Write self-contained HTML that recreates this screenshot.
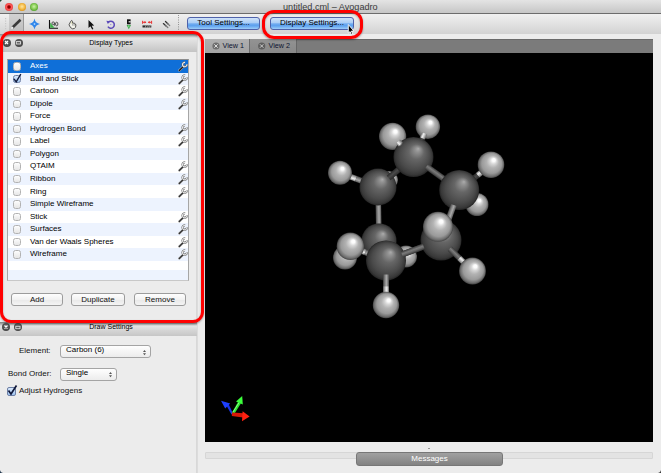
<!DOCTYPE html>
<html><head><meta charset="utf-8">
<style>
*{margin:0;padding:0;box-sizing:border-box}
html,body{width:661px;height:473px;overflow:hidden;background:#ececec;font-family:"Liberation Sans",sans-serif;position:relative}
.a{position:absolute}
#titlebar{left:0;top:0;width:661px;height:13px;background:linear-gradient(#e4e4e4,#c6c6c6)}
#tbline{left:0;top:13px;width:661px;height:1px;background:#6c6c6c}
#toolbar{left:0;top:14px;width:661px;height:20px;background:linear-gradient(#f0f0f0,#d2d2d2)}
.tl{width:8px;height:8px;border-radius:50%;top:3px}
.btn{height:13px;border-radius:3px;font-size:8px;text-align:center;line-height:10px;color:#000}
.blue{background:linear-gradient(#cfe2f9,#a9cdf5 45%,#72acf0 52%,#5da1ee 70%,#9ccdf9);border:1px solid #4f62aa}
.dtitle{left:0;width:197px;font-size:7px;text-align:center;color:#000}
.cbtn{width:8px;height:8px;border-radius:50%;background:radial-gradient(circle at 50% 40%,#666,#3a3a3a)}
#list{left:7px;top:59px;width:182px;height:222px;background:#fff;border:1px solid #a6a6a6;border-top-color:#8c8c8c;border-bottom-color:#c8c8c8;overflow:hidden}
.row{position:absolute;left:0;width:180px;height:12.6px;font-size:8px;color:#000}
.row.alt{background:#edf3fe}
.row.sel{background:#0f6fd8;color:#fff}
.row span{position:absolute;left:22px;top:1px}
.cb{position:absolute;left:4.5px;top:2px;width:8.5px;height:8.5px;border-radius:2.5px;border:1px solid #b2b2b2;background:linear-gradient(#fdfdfd,#e6e6e6)}
.wr{position:absolute;left:169.5px;top:1px;width:10px;height:10px}
.pbtn{height:13px;border:1px solid #9c9c9c;border-radius:3px;background:linear-gradient(#fefefe,#f2f2f2 50%,#e8e8e8 51%,#f4f4f4);font-size:8px;text-align:center;line-height:12px;color:#111}
.red{border:3.4px solid #f00;box-shadow:0 1px 2px rgba(0,0,0,.35), inset 0 1px 2px rgba(0,0,0,.3)}
.combo{height:13px;border:1px solid #a4a4a4;border-radius:3px;background:linear-gradient(#fefefe,#ececec);font-size:8px;line-height:8px;color:#000;padding-left:5px}
</style></head><body>
<div id="titlebar" class="a">
  <div class="a" style="left:0;top:0;width:3px;height:3px;background:radial-gradient(circle at 100% 100%,transparent 2.6px,#1d4a36 3.2px)"></div>
  <div class="a tl" style="left:5px;background:radial-gradient(circle at 50% 50%,#700000 0,#a00000 22%,#ff5c5c 42%,#f04848 65%,#c83030 85%,#902424 100%)"></div>
  <div class="a tl" style="left:17.5px;background:radial-gradient(circle at 50% 45%,#ffe6a0 0,#f6c050 40%,#dc9418 75%,#9c6414 100%)"></div>
  <div class="a tl" style="left:30px;background:radial-gradient(circle at 50% 45%,#ccf2a8 0,#8cd05a 40%,#52a02c 75%,#336e1e 100%)"></div>
  <div class="a" style="left:283px;top:1.5px;font-size:9.15px;color:#3a3a3a;line-height:11px">untitled.cml – Avogadro</div>
</div>
<div id="tbline" class="a"></div>
<div id="toolbar" class="a">
  <!-- pressed pencil -->
  <div class="a" style="left:9px;top:0;width:15px;height:17px;background:linear-gradient(#d2d2d2,#bfbfbf);border-right:1px solid #9a9a9a"></div>
  <svg class="a" style="left:0;top:0" width="180" height="20" viewBox="0 14 180 20">
    <g fill="#c8c8c8"><rect x="5" y="18" width="1.2" height="1.2"/><rect x="5" y="20.5" width="1.2" height="1.2"/><rect x="5" y="23" width="1.2" height="1.2"/><rect x="5" y="25.5" width="1.2" height="1.2"/><rect x="5" y="28" width="1.2" height="1.2"/></g>
    <!-- pencil -->
    <line x1="12.5" y1="27.5" x2="20.5" y2="19.8" stroke="#3a3a3a" stroke-width="2.6"/>
    <line x1="11.5" y1="28.6" x2="13" y2="27" stroke="#eee" stroke-width="1.6"/>
    <!-- star -->
    <path d="M34.5 18.5 Q35.3 23.2 40 24 Q35.3 24.8 34.5 29.5 Q33.7 24.8 29 24 Q33.7 23.2 34.5 18.5Z" fill="#2f86ea"/>
    <circle cx="34.5" cy="24" r=".9" fill="#a8d4ff"/>
    <!-- measure -->
    <path d="M49.5 20 V28.3 H58" fill="none" stroke="#111" stroke-width="1.1"/>
    <path d="M50.2 22.5 L54.5 27.8 H50.2Z" fill="#3fb04a"/>
    <g fill="none" stroke="#333" stroke-width=".8"><circle cx="53.2" cy="23.2" r="1.3"/><path d="M54.5 23.2 L54.3 25.8"/><ellipse cx="56.7" cy="24" rx="1.2" ry="1.8"/></g>
    <!-- hand -->
    <path d="M69 24.8 L70.8 21.2 Q71.5 19.9 72.2 20.8 L72.6 23 L74.2 23.2 Q75.6 23.6 75.9 25 L75.5 27.4 Q74.6 28.9 72.5 28.8 Q70.3 28.3 69 24.8Z" fill="#f2f2ea" stroke="#3a3a3a" stroke-width=".85"/>
    <path d="M72.6 23.2 L72.9 25.8 M74.2 23.4 L74.3 25.6" stroke="#666" stroke-width=".6" fill="none"/>
    <path d="M71.6 21.5 L71.9 24" stroke="#d8d8a0" stroke-width=".7"/>
    <!-- arrow -->
    <path d="M88.5 20 L88.5 28 L90.4 26.3 L92.2 29.6 L93.4 29 L91.7 25.8 L94.2 25.6Z" fill="#111"/>
    <!-- rotate -->
    <path d="M108.2 22.4 A3.5 3.5 0 1 1 107.9 26.7" fill="none" stroke="#5b49b8" stroke-width="1.5"/>
    <path d="M106.3 20.8 L110 21.2 L107.9 24Z" fill="#5b49b8"/>
    <circle cx="110.8" cy="24.6" r=".6" fill="#8a7ad0"/>
    <!-- bond centric -->
    <rect x="127" y="19.3" width="3.6" height="5" fill="#111"/>
    <rect x="128.6" y="21.2" width="2.1" height="1.2" fill="#eee"/>
    <path d="M126.6 25 H131 L128.8 29.2Z" fill="#3aa84a"/>
    <rect x="128.2" y="25.3" width="1.2" height="2" fill="#8ad890"/>
    <!-- align -->
    <g stroke="#e83030" stroke-width="1" fill="none"><path d="M142.6 20.8 V23.8 M151.6 20.8 V23.8 M143 22.3 H146 M148.2 22.3 H151.2"/></g>
    <path d="M146.4 22.3 L144.4 21 V23.6Z M147.8 22.3 L149.8 21 V23.6Z" fill="#e83030"/>
    <rect x="142.5" y="25.4" width="8.8" height="2.1" fill="#2a2a2a"/>
    <g stroke="#ddd" stroke-width=".6"><path d="M145.3 27.5 L146 25.4 M147.6 27.5 L148.3 25.4 M149.5 27.5 L150.2 25.4"/></g>
    <!-- auto opt -->
    <g stroke-width="1.3" stroke-linecap="round"><line x1="163.4" y1="23.6" x2="165.8" y2="25.8" stroke="#333"/><line x1="165.8" y1="25.8" x2="167.8" y2="27.6" stroke="#777"/><line x1="165.5" y1="21.5" x2="167.8" y2="23.7" stroke="#333"/><line x1="167.8" y1="23.7" x2="169.7" y2="25.6" stroke="#777"/></g>
    <g fill="#666"><rect x="178" y="15" width=".8" height=".8"/><rect x="178" y="17.3" width=".8" height=".8"/><rect x="178" y="19.6" width=".8" height=".8"/><rect x="178" y="21.9" width=".8" height=".8"/><rect x="178" y="24.2" width=".8" height=".8"/><rect x="178" y="26.5" width=".8" height=".8"/><rect x="178" y="28.8" width=".8" height=".8"/></g>
  </svg>
  <div class="a btn blue" style="left:187px;top:3px;width:73px">Tool Settings...</div>
  <div class="a btn blue" style="left:270px;top:3px;width:84px">Display Settings...</div>
</div>

<!-- dock 1 -->
<div class="a" style="left:196px;top:34px;width:2px;height:439px;background:linear-gradient(90deg,#d6d6d6,#dedede)"></div>
<div class="a dtitle" style="top:34px;height:18px;background:linear-gradient(#8a8a8a,#e6e6e6 4px,#d8d8d8 10px,#c4c4c4)">
  <div class="a cbtn" style="left:2.5px;top:4.5px"></div>
  <div class="a cbtn" style="left:14.5px;top:4.5px"></div>
  <svg class="a" style="left:0;top:0" width="30" height="18">
    <path d="M5 7 L8 10 M8 7 L5 10" stroke="#fff" stroke-width="1.2"/>
    <rect x="16.3" y="7.6" width="4.2" height="2.4" fill="none" stroke="#ddd" stroke-width=".9"/>
  </svg>
  <div class="a" style="left:0;top:5px;width:222px;text-align:center;line-height:8px">Display Types</div>
</div>
<div id="list" class="a">
  <div class="row sel" style="top:0.00px;height:12.55px"><div class="cb"></div><span>Axes</span><svg class="wr" viewBox="0 0 10 10" style="overflow:visible"><path d="M1.3 9.4 L5.6 5.2" stroke="#bbb" stroke-width="2.3" stroke-linecap="round"/><path d="M1.3 9.4 L5.6 5.2" stroke="#1a1a1a" stroke-width="1.4" stroke-linecap="round"/><path d="M8.9 3.3 A2.2 2.2 0 1 1 7.1 1.4" fill="none" stroke="#666" stroke-width="2.1"/><path d="M8.9 3.3 A2.2 2.2 0 1 1 7.1 1.4" fill="none" stroke="#f0f0f0" stroke-width="1.1"/></svg></div>
  <div class="row alt" style="top:12.55px;height:12.55px"><div class="cb" style="border-color:#6d7fa5;background:linear-gradient(#d8e8fb,#9fc4f0)"></div><svg style="position:absolute;left:3px;top:0" width="12" height="11"><path d="M3 5.8 L5.2 8.8 L9.8 1.2" fill="none" stroke="#10183a" stroke-width="1.4"/></svg><span>Ball and Stick</span><svg class="wr" viewBox="0 0 10 10" style="overflow:visible"><path d="M1.3 9.4 L5.6 5.2" stroke="#bbb" stroke-width="2.3" stroke-linecap="round"/><path d="M1.3 9.4 L5.6 5.2" stroke="#333" stroke-width="1.4" stroke-linecap="round"/><path d="M8.9 3.3 A2.2 2.2 0 1 1 7.1 1.4" fill="none" stroke="#666" stroke-width="2.1"/><path d="M8.9 3.3 A2.2 2.2 0 1 1 7.1 1.4" fill="none" stroke="#e8e8e8" stroke-width="1.1"/></svg></div>
  <div class="row" style="top:25.10px;height:12.55px"><div class="cb"></div><span>Cartoon</span><svg class="wr" viewBox="0 0 10 10" style="overflow:visible"><path d="M1.3 9.4 L5.6 5.2" stroke="#bbb" stroke-width="2.3" stroke-linecap="round"/><path d="M1.3 9.4 L5.6 5.2" stroke="#333" stroke-width="1.4" stroke-linecap="round"/><path d="M8.9 3.3 A2.2 2.2 0 1 1 7.1 1.4" fill="none" stroke="#666" stroke-width="2.1"/><path d="M8.9 3.3 A2.2 2.2 0 1 1 7.1 1.4" fill="none" stroke="#e8e8e8" stroke-width="1.1"/></svg></div>
  <div class="row alt" style="top:37.65px;height:12.55px"><div class="cb"></div><span>Dipole</span><svg class="wr" viewBox="0 0 10 10" style="overflow:visible"><path d="M1.3 9.4 L5.6 5.2" stroke="#bbb" stroke-width="2.3" stroke-linecap="round"/><path d="M1.3 9.4 L5.6 5.2" stroke="#333" stroke-width="1.4" stroke-linecap="round"/><path d="M8.9 3.3 A2.2 2.2 0 1 1 7.1 1.4" fill="none" stroke="#666" stroke-width="2.1"/><path d="M8.9 3.3 A2.2 2.2 0 1 1 7.1 1.4" fill="none" stroke="#e8e8e8" stroke-width="1.1"/></svg></div>
  <div class="row" style="top:50.20px;height:12.55px"><div class="cb"></div><span>Force</span></div>
  <div class="row alt" style="top:62.75px;height:12.55px"><div class="cb"></div><span>Hydrogen Bond</span><svg class="wr" viewBox="0 0 10 10" style="overflow:visible"><path d="M1.3 9.4 L5.6 5.2" stroke="#bbb" stroke-width="2.3" stroke-linecap="round"/><path d="M1.3 9.4 L5.6 5.2" stroke="#333" stroke-width="1.4" stroke-linecap="round"/><path d="M8.9 3.3 A2.2 2.2 0 1 1 7.1 1.4" fill="none" stroke="#666" stroke-width="2.1"/><path d="M8.9 3.3 A2.2 2.2 0 1 1 7.1 1.4" fill="none" stroke="#e8e8e8" stroke-width="1.1"/></svg></div>
  <div class="row" style="top:75.30px;height:12.55px"><div class="cb"></div><span>Label</span><svg class="wr" viewBox="0 0 10 10" style="overflow:visible"><path d="M1.3 9.4 L5.6 5.2" stroke="#bbb" stroke-width="2.3" stroke-linecap="round"/><path d="M1.3 9.4 L5.6 5.2" stroke="#333" stroke-width="1.4" stroke-linecap="round"/><path d="M8.9 3.3 A2.2 2.2 0 1 1 7.1 1.4" fill="none" stroke="#666" stroke-width="2.1"/><path d="M8.9 3.3 A2.2 2.2 0 1 1 7.1 1.4" fill="none" stroke="#e8e8e8" stroke-width="1.1"/></svg></div>
  <div class="row alt" style="top:87.85px;height:12.55px"><div class="cb"></div><span>Polygon</span></div>
  <div class="row" style="top:100.40px;height:12.55px"><div class="cb"></div><span>QTAIM</span><svg class="wr" viewBox="0 0 10 10" style="overflow:visible"><path d="M1.3 9.4 L5.6 5.2" stroke="#bbb" stroke-width="2.3" stroke-linecap="round"/><path d="M1.3 9.4 L5.6 5.2" stroke="#333" stroke-width="1.4" stroke-linecap="round"/><path d="M8.9 3.3 A2.2 2.2 0 1 1 7.1 1.4" fill="none" stroke="#666" stroke-width="2.1"/><path d="M8.9 3.3 A2.2 2.2 0 1 1 7.1 1.4" fill="none" stroke="#e8e8e8" stroke-width="1.1"/></svg></div>
  <div class="row alt" style="top:112.95px;height:12.55px"><div class="cb"></div><span>Ribbon</span><svg class="wr" viewBox="0 0 10 10" style="overflow:visible"><path d="M1.3 9.4 L5.6 5.2" stroke="#bbb" stroke-width="2.3" stroke-linecap="round"/><path d="M1.3 9.4 L5.6 5.2" stroke="#333" stroke-width="1.4" stroke-linecap="round"/><path d="M8.9 3.3 A2.2 2.2 0 1 1 7.1 1.4" fill="none" stroke="#666" stroke-width="2.1"/><path d="M8.9 3.3 A2.2 2.2 0 1 1 7.1 1.4" fill="none" stroke="#e8e8e8" stroke-width="1.1"/></svg></div>
  <div class="row" style="top:125.50px;height:12.55px"><div class="cb"></div><span>Ring</span><svg class="wr" viewBox="0 0 10 10" style="overflow:visible"><path d="M1.3 9.4 L5.6 5.2" stroke="#bbb" stroke-width="2.3" stroke-linecap="round"/><path d="M1.3 9.4 L5.6 5.2" stroke="#333" stroke-width="1.4" stroke-linecap="round"/><path d="M8.9 3.3 A2.2 2.2 0 1 1 7.1 1.4" fill="none" stroke="#666" stroke-width="2.1"/><path d="M8.9 3.3 A2.2 2.2 0 1 1 7.1 1.4" fill="none" stroke="#e8e8e8" stroke-width="1.1"/></svg></div>
  <div class="row alt" style="top:138.05px;height:12.55px"><div class="cb"></div><span>Simple Wireframe</span></div>
  <div class="row" style="top:150.60px;height:12.55px"><div class="cb"></div><span>Stick</span><svg class="wr" viewBox="0 0 10 10" style="overflow:visible"><path d="M1.3 9.4 L5.6 5.2" stroke="#bbb" stroke-width="2.3" stroke-linecap="round"/><path d="M1.3 9.4 L5.6 5.2" stroke="#333" stroke-width="1.4" stroke-linecap="round"/><path d="M8.9 3.3 A2.2 2.2 0 1 1 7.1 1.4" fill="none" stroke="#666" stroke-width="2.1"/><path d="M8.9 3.3 A2.2 2.2 0 1 1 7.1 1.4" fill="none" stroke="#e8e8e8" stroke-width="1.1"/></svg></div>
  <div class="row alt" style="top:163.15px;height:12.55px"><div class="cb"></div><span>Surfaces</span><svg class="wr" viewBox="0 0 10 10" style="overflow:visible"><path d="M1.3 9.4 L5.6 5.2" stroke="#bbb" stroke-width="2.3" stroke-linecap="round"/><path d="M1.3 9.4 L5.6 5.2" stroke="#333" stroke-width="1.4" stroke-linecap="round"/><path d="M8.9 3.3 A2.2 2.2 0 1 1 7.1 1.4" fill="none" stroke="#666" stroke-width="2.1"/><path d="M8.9 3.3 A2.2 2.2 0 1 1 7.1 1.4" fill="none" stroke="#e8e8e8" stroke-width="1.1"/></svg></div>
  <div class="row" style="top:175.70px;height:12.55px"><div class="cb"></div><span>Van der Waals Spheres</span><svg class="wr" viewBox="0 0 10 10" style="overflow:visible"><path d="M1.3 9.4 L5.6 5.2" stroke="#bbb" stroke-width="2.3" stroke-linecap="round"/><path d="M1.3 9.4 L5.6 5.2" stroke="#333" stroke-width="1.4" stroke-linecap="round"/><path d="M8.9 3.3 A2.2 2.2 0 1 1 7.1 1.4" fill="none" stroke="#666" stroke-width="2.1"/><path d="M8.9 3.3 A2.2 2.2 0 1 1 7.1 1.4" fill="none" stroke="#e8e8e8" stroke-width="1.1"/></svg></div>
  <div class="row alt" style="top:188.25px;height:12.55px"><div class="cb"></div><span>Wireframe</span><svg class="wr" viewBox="0 0 10 10" style="overflow:visible"><path d="M1.3 9.4 L5.6 5.2" stroke="#bbb" stroke-width="2.3" stroke-linecap="round"/><path d="M1.3 9.4 L5.6 5.2" stroke="#333" stroke-width="1.4" stroke-linecap="round"/><path d="M8.9 3.3 A2.2 2.2 0 1 1 7.1 1.4" fill="none" stroke="#666" stroke-width="2.1"/><path d="M8.9 3.3 A2.2 2.2 0 1 1 7.1 1.4" fill="none" stroke="#e8e8e8" stroke-width="1.1"/></svg></div>
  <div class="row" style="top:200.80px;height:9.30px"></div>
  <div class="row alt" style="top:210.10px;height:14.00px"></div>
</div>
<div class="a pbtn" style="left:11px;top:293px;width:52px">Add</div>
<div class="a pbtn" style="left:71px;top:293px;width:54px">Duplicate</div>
<div class="a pbtn" style="left:134px;top:293px;width:52px">Remove</div>

<!-- dock 2 -->
<div class="a dtitle" style="top:322px;height:13.6px;background:linear-gradient(#7a7a7a,#e4e4e4 4px,#d6d6d6 8px,#c6c6c6)">
  <div class="a cbtn" style="left:2px;top:1px"></div>
  <div class="a cbtn" style="left:14px;top:1px"></div>
  <svg class="a" style="left:0;top:0" width="30" height="13">
    <path d="M4.5 3.5 L7.5 6.5 M7.5 3.5 L4.5 6.5" stroke="#fff" stroke-width="1.3"/>
    <rect x="15.8" y="4.3" width="4.2" height="2.4" fill="none" stroke="#ddd" stroke-width=".9"/>
  </svg>
  <div class="a" style="left:0;top:1px;width:222px;text-align:center;line-height:8px">Draw Settings</div>
</div>
<div class="a" style="left:19px;top:346px;font-size:8px;color:#111">Element:</div>
<div class="a combo" style="left:60px;top:345px;width:91px">Carbon (6)<svg class="a" style="right:3px;top:2.5px" width="5" height="7"><path d="M1 3 L2.5 1 L4 3Z M1 4.2 L2.5 6.2 L4 4.2Z" fill="#555"/></svg></div>
<div class="a" style="left:8px;top:369px;font-size:8px;color:#111">Bond Order:</div>
<div class="a combo" style="left:60px;top:367.5px;width:57px">Single<svg class="a" style="right:3px;top:2.5px" width="5" height="7"><path d="M1 3 L2.5 1 L4 3Z M1 4.2 L2.5 6.2 L4 4.2Z" fill="#555"/></svg></div>
<div class="a" style="left:7px;top:386.5px;width:9px;height:9px;border-radius:2px;border:1px solid #6d7fa5;background:linear-gradient(#d8e8fb,#9fc4f0)"></div>
<svg class="a" style="left:6px;top:384px" width="12" height="12"><path d="M2.5 6.5 L5 10 L10.5 1.5" fill="none" stroke="#10183a" stroke-width="1.7"/></svg>
<div class="a" style="left:19px;top:386px;font-size:8px;color:#111">Adjust Hydrogens</div>

<!-- view -->
<div class="a" style="left:205px;top:39px;width:448px;height:14px;background:#7b7b7b;border-top:1px solid #6a6a6a"></div>
<div class="a" style="left:205px;top:39px;width:45px;height:14px;background:linear-gradient(#b0b0b0,#a2a2a2);border-right:1px solid #6a6a6a"></div>
<div class="a" style="left:250px;top:39px;width:47px;height:14px;background:linear-gradient(#939393,#888);border-right:1px solid #666"></div>
<svg class="a" style="left:205px;top:39px" width="100" height="14">
  <circle cx="11" cy="7" r="3.6" fill="#6e6e6e"/><path d="M9.3 5.3 L12.7 8.7 M12.7 5.3 L9.3 8.7" stroke="#ddd" stroke-width="1"/>
  <circle cx="56.7" cy="7" r="3.6" fill="#5e5e5e"/><path d="M55 5.3 L58.4 8.7 M58.4 5.3 L55 8.7" stroke="#ccc" stroke-width="1"/>
</svg>
<div class="a" style="left:222.5px;top:42px;font-size:7.2px;color:#0c1430;line-height:8px">View 1</div>
<div class="a" style="left:268.5px;top:42px;font-size:7.2px;color:#0c1430;line-height:8px">View 2</div>
<div class="a" style="left:205px;top:53px;width:448px;height:389px;background:#000"></div>
<svg class="a" style="left:0;top:0" width="661" height="473">
  <defs>
    <radialGradient id="gC" cx="0.5" cy="0.5" r="0.5" fx="0.62" fy="0.29">
      <stop offset="0" stop-color="#acacac"/>
      <stop offset="0.12" stop-color="#929292"/>
      <stop offset="0.38" stop-color="#666666"/>
      <stop offset="0.75" stop-color="#4a4a4a"/>
      <stop offset="0.92" stop-color="#383838"/>
      <stop offset="1" stop-color="#242424"/>
    </radialGradient>
    <radialGradient id="gH" cx="0.5" cy="0.5" r="0.5" fx="0.62" fy="0.3">
      <stop offset="0" stop-color="#ffffff"/>
      <stop offset="0.12" stop-color="#fcfcfc"/>
      <stop offset="0.26" stop-color="#d6d6d6"/>
      <stop offset="0.46" stop-color="#b2b2b2"/>
      <stop offset="0.75" stop-color="#9a9a9a"/>
      <stop offset="0.91" stop-color="#6e6e6e"/>
      <stop offset="1" stop-color="#444444"/>
    </radialGradient>
    <linearGradient id="gbH" x1="0" y1="0" x2="0" y2="1">
      <stop offset="0" stop-color="#777"/><stop offset="0.35" stop-color="#eee"/><stop offset="0.6" stop-color="#c8c8c8"/><stop offset="1" stop-color="#666"/>
    </linearGradient>
    <linearGradient id="gbL" x1="0" y1="0" x2="0" y2="1">
      <stop offset="0" stop-color="#555"/><stop offset="0.4" stop-color="#a8a8a8"/><stop offset="0.65" stop-color="#888"/><stop offset="1" stop-color="#444"/>
    </linearGradient>
    <linearGradient id="gbM" x1="0" y1="0" x2="0" y2="1">
      <stop offset="0" stop-color="#3a3a3a"/><stop offset="0.4" stop-color="#7a7a7a"/><stop offset="0.65" stop-color="#666"/><stop offset="1" stop-color="#333"/>
    </linearGradient>
    <linearGradient id="gbD" x1="0" y1="0" x2="0" y2="1">
      <stop offset="0" stop-color="#2a2a2a"/><stop offset="0.45" stop-color="#4a4a4a"/><stop offset="1" stop-color="#2a2a2a"/>
    </linearGradient>
  </defs>
  <rect transform="translate(378.00,187.00) rotate(-32.5)" x="0" y="-2.9" width="11.27" height="5.8" fill="url(#gbM)"/>
<rect transform="translate(387.51,180.95) rotate(-32.5)" x="0" y="-2.9" width="1.77" height="5.8" fill="url(#gbH)"/>
<circle cx="389" cy="180" r="9" fill="url(#gH)"/>
<rect transform="translate(459.20,190.00) rotate(39.2)" x="0" y="-2.9" width="15.73" height="5.8" fill="url(#gbM)"/>
<rect transform="translate(471.40,199.93) rotate(39.2)" x="0" y="-2.9" width="7.23" height="5.8" fill="url(#gbH)"/>
<circle cx="477" cy="204.5" r="11.5" fill="url(#gH)"/>
<rect transform="translate(386.00,260.50) rotate(-11.3)" x="0" y="-2.9" width="14.70" height="5.8" fill="url(#gbM)"/>
<rect transform="translate(400.41,257.62) rotate(-11.3)" x="0" y="-2.9" width="5.70" height="5.8" fill="url(#gbH)"/>
<circle cx="406" cy="256.5" r="11" fill="url(#gH)"/>
<rect transform="translate(379.00,241.00) rotate(154.1)" x="0" y="-2.9" width="21.70" height="5.8" fill="url(#gbM)"/>
<rect transform="translate(359.48,250.47) rotate(154.1)" x="0" y="-2.9" width="16.10" height="5.8" fill="url(#gbH)"/>
<circle cx="345" cy="257.5" r="12" fill="url(#gH)"/>
<circle cx="392.6" cy="136.3" r="13.6" fill="url(#gH)"/>
<circle cx="427.9" cy="126.7" r="12.2" fill="url(#gH)"/>
<rect transform="translate(378.00,187.00) rotate(-159.5)" x="0" y="-2.9" width="23.53" height="5.8" fill="url(#gbL)"/>
<rect transform="translate(355.96,178.76) rotate(-159.5)" x="0" y="-2.9" width="7.43" height="5.8" fill="url(#gbH)"/>
<circle cx="340" cy="172.8" r="12" fill="url(#gH)"/>
<rect transform="translate(378.00,187.00) rotate(88.9)" x="0" y="-2.75" width="54.01" height="5.5" fill="url(#gbL)"/>
<circle cx="378" cy="187" r="18.5" fill="url(#gC)"/>
<rect transform="translate(388.60,178.04) rotate(-40.2)" x="0" y="-3.0" width="32.60" height="6" fill="url(#gbD)"/>
<circle cx="413.5" cy="157" r="20" fill="url(#gC)"/>
<rect transform="translate(401.42,145.04) rotate(-135.3)" x="0" y="-2.9" width="0.91" height="5.8" fill="url(#gbM)"/>
<rect transform="translate(400.78,144.40) rotate(-135.3)" x="0" y="-2.9" width="4.03" height="5.8" fill="url(#gbH)"/>
<rect transform="translate(421.66,139.84) rotate(-64.6)" x="0" y="-2.75" width="1.67" height="5.5" fill="url(#gbD)"/>
<rect transform="translate(422.37,138.33) rotate(-64.6)" x="0" y="-2.75" width="5.55" height="5.5" fill="url(#gbH)"/>
<rect transform="translate(426.47,166.37) rotate(35.8)" x="0" y="-3.0" width="40.37" height="6" fill="url(#gbM)"/>
<rect transform="translate(467.03,183.77) rotate(-38.5)" x="0" y="-2.9" width="13.67" height="5.8" fill="url(#gbD)"/>
<rect transform="translate(477.72,175.26) rotate(-38.5)" x="0" y="-2.9" width="6.33" height="5.8" fill="url(#gbH)"/>
<circle cx="491" cy="164.7" r="13.3" fill="url(#gH)"/>
<circle cx="459.2" cy="190" r="20" fill="url(#gC)"/>
<circle cx="379" cy="241" r="17.6" fill="url(#gC)"/>
<rect transform="translate(386.00,260.50) rotate(-158.3)" x="0" y="-2.9" width="22.31" height="5.8" fill="url(#gbL)"/>
<rect transform="translate(365.27,252.23) rotate(-158.3)" x="0" y="-2.9" width="16.01" height="5.8" fill="url(#gbH)"/>
<circle cx="350.4" cy="246.3" r="13.7" fill="url(#gH)"/>
<rect transform="translate(453.73,205.03) rotate(110.0)" x="0" y="-3.0" width="37.21" height="6" fill="url(#gbL)"/>
<rect transform="translate(400.99,254.91) rotate(-20.4)" x="0" y="-3.0" width="26.30" height="6" fill="url(#gbM)"/>
<circle cx="441" cy="240" r="20.5" fill="url(#gC)"/>
<rect transform="translate(449.77,248.63) rotate(44.5)" x="0" y="-2.9" width="13.35" height="5.8" fill="url(#gbM)"/>
<rect transform="translate(459.28,257.99) rotate(44.5)" x="0" y="-2.9" width="7.83" height="5.8" fill="url(#gbH)"/>
<circle cx="472.5" cy="271" r="13.4" fill="url(#gH)"/>
<rect transform="translate(441.00,240.00) rotate(-102.8)" x="0" y="-2.9" width="9.52" height="5.8" fill="url(#gbM)"/>
<rect transform="translate(438.89,230.72) rotate(-102.8)" x="0" y="-2.9" width="4.02" height="5.8" fill="url(#gbH)"/>
<circle cx="438" cy="226.8" r="15" fill="url(#gH)"/>
<circle cx="386" cy="260.5" r="20" fill="url(#gC)"/>
<rect transform="translate(401.93,254.56) rotate(-20.4)" x="0" y="-3.0" width="23.25" height="6" fill="url(#gbM)"/>
<rect transform="translate(386.00,274.50) rotate(90.0)" x="0" y="-2.9" width="11.65" height="5.8" fill="url(#gbL)"/>
<rect transform="translate(386.00,286.15) rotate(90.0)" x="0" y="-2.9" width="8.29" height="5.8" fill="url(#gbH)"/>
<circle cx="386" cy="305" r="13.2" fill="url(#gH)"/>
  <!-- axes -->
  <g stroke-linecap="butt">
    <path d="M231.5 414.5 L225.8 404.6 L228.2 403.2 L233 413.5Z" fill="#1a36e8"/>
    <path d="M221 400.8 L230.2 403.6 L225.2 408.6Z" fill="#1e40ff"/>
    <path d="M231.6 413.2 L238.2 401.8 L241 403.3 L233.6 415Z" fill="#2ee62e"/>
    <line x1="233" y1="412" x2="239.2" y2="402.4" stroke="#9cff9c" stroke-width=".8"/>
    <path d="M242.2 396 L242.8 404.6 L236 401.4Z" fill="#3cff3c"/>
    <path d="M232 412.4 L243.6 413.3 L243.3 417.4 L231.8 416Z" fill="#d81808"/>
    <path d="M249.6 416.6 L242.6 411.2 L242 421.2Z" fill="#ff2010"/>
  </g>
</svg>
<div class="a" style="left:205px;top:452px;width:448px;height:7px;background:#e3e3e3;border:1px solid #d6d6d6;border-radius:1px"></div>
<div class="a" style="left:427.5px;top:447.5px;width:2px;height:1.5px;background:#999"></div>
<div class="a" style="left:356px;top:452px;width:147px;height:14px;border-radius:3px;background:linear-gradient(#a0a0a0,#828282);border:1px solid #777;color:#fff;font-size:8px;text-align:center;line-height:12px">Messages</div>

<div class="a" style="left:0;top:470px;width:3px;height:3px;background:radial-gradient(circle at 100% 0,transparent 2.4px,#22384e 3.2px)"></div>
<div class="a" style="left:658px;top:470px;width:3px;height:3px;background:radial-gradient(circle at 0 0,transparent 2.4px,#3a3a3a 3.2px)"></div>
<!-- red outlines -->
<div class="a red" style="left:0;top:31px;width:204px;height:292px;border-radius:11px"></div>
<div class="a red" style="left:262px;top:10px;width:100.5px;height:28.5px;border-radius:12px"></div>
<!-- cursor -->
<svg class="a" style="left:346px;top:23px" width="10" height="13"><path d="M2.3 1.5 V10.2 L4.1 8.6 L5.6 11.9 L6.9 11.3 L5.4 8.1 L7.8 7.9Z" fill="#000" stroke="#fff" stroke-width=".9"/></svg>
</body></html>
